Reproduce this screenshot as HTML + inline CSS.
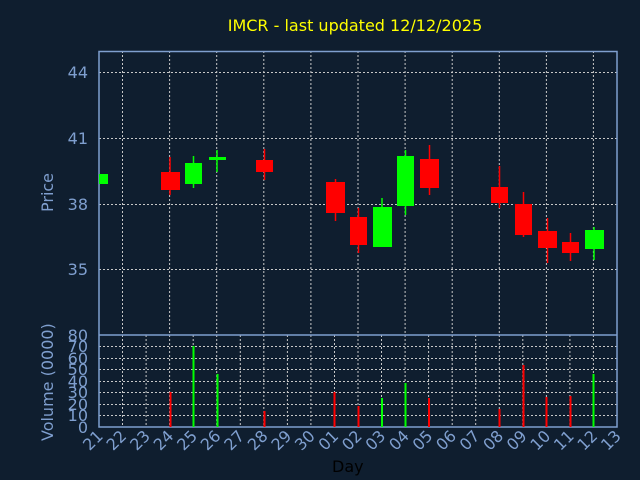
<!DOCTYPE html>
<html><head><meta charset="utf-8"><style>
html,body{margin:0;padding:0;background:#0f1e2f;width:640px;height:480px;overflow:hidden}
svg{display:block}
text{font-family:"DejaVu Sans","Liberation Sans",sans-serif}
</style></head><body>
<svg width="640" height="480" viewBox="0 0 640 480" xmlns="http://www.w3.org/2000/svg">
<rect width="640" height="480" fill="#0f1e2f"/>
<text x="355" y="31" fill="#ffff00" font-size="16" text-anchor="middle">IMCR - last updated 12/12/2025</text>
<g stroke="#c8c8c8" stroke-width="1" stroke-dasharray="2,2" fill="none">
<!-- price horizontal -->
<path d="M99 72.5H617M99 138.5H617M99 204.5H617M99 269.5H617"/>
<!-- price vertical odd days -->
<path d="M122.5 51V335M169.6 51V335M216.7 51V335M263.8 51V335M310.9 51V335M358 51V335M405.1 51V335M452.2 51V335M499.3 51V335M546.4 51V335M593.4 51V335"/>
<!-- volume horizontal -->
<path d="M99 346.5H617M99 358.5H617M99 369.5H617M99 381.5H617M99 392.5H617M99 404.5H617M99 415.5H617"/>
<!-- volume vertical every day -->
<path d="M122.5 335V427M146.1 335V427M169.6 335V427M193.2 335V427M216.7 335V427M240.3 335V427M263.8 335V427M287.4 335V427M310.9 335V427M334.5 335V427M358 335V427M381.5 335V427M405.1 335V427M428.6 335V427M452.2 335V427M475.7 335V427M499.3 335V427M522.8 335V427M546.4 335V427M569.9 335V427M593.4 335V427"/>
</g>
<g stroke="#7f9fcf" stroke-width="1.5" fill="none">
<rect x="99" y="51.5" width="518" height="375.5"/>
<path d="M99 335H617"/>
</g>
<!-- candles -->
<g stroke-width="1.5">
<rect x="99" y="174" width="9" height="10" fill="#00ff00"/>
<line x1="170" y1="157" x2="170" y2="195" stroke="#ff0000"/><rect x="161" y="172" width="19" height="18" fill="#ff0000"/>
<line x1="193.5" y1="156" x2="193.5" y2="188" stroke="#00ff00"/><rect x="185" y="163" width="17" height="21" fill="#00ff00"/>
<line x1="217" y1="150" x2="217" y2="172" stroke="#00ff00"/><rect x="209" y="157" width="17" height="3" fill="#00ff00"/>
<line x1="264.5" y1="149" x2="264.5" y2="180" stroke="#ff0000"/><rect x="256" y="160" width="17" height="12" fill="#ff0000"/>
<line x1="335.5" y1="179" x2="335.5" y2="221" stroke="#ff0000"/><rect x="326" y="182" width="19" height="31" fill="#ff0000"/>
<line x1="358.5" y1="208" x2="358.5" y2="253" stroke="#ff0000"/><rect x="350" y="217" width="17" height="28" fill="#ff0000"/>
<line x1="382" y1="198" x2="382" y2="247" stroke="#00ff00"/><rect x="373" y="207" width="19" height="40" fill="#00ff00"/>
<line x1="405.5" y1="150" x2="405.5" y2="215" stroke="#00ff00"/><rect x="397" y="156" width="17" height="50" fill="#00ff00"/>
<line x1="429.5" y1="145" x2="429.5" y2="195" stroke="#ff0000"/><rect x="420" y="159" width="19" height="29" fill="#ff0000"/>
<line x1="499.5" y1="166" x2="499.5" y2="208" stroke="#ff0000"/><rect x="491" y="187" width="17" height="16" fill="#ff0000"/>
<line x1="523.5" y1="192" x2="523.5" y2="237" stroke="#ff0000"/><rect x="515" y="204" width="17" height="31" fill="#ff0000"/>
<line x1="547.5" y1="218" x2="547.5" y2="263" stroke="#ff0000"/><rect x="538" y="231" width="19" height="17" fill="#ff0000"/>
<line x1="570.5" y1="233" x2="570.5" y2="261" stroke="#ff0000"/><rect x="562" y="242" width="17" height="11" fill="#ff0000"/>
<line x1="594" y1="227" x2="594" y2="260" stroke="#00ff00"/><rect x="585" y="230" width="19" height="19" fill="#00ff00"/>
</g>
<!-- volume bars -->
<g stroke-width="2">
<line x1="170.5" y1="392" x2="170.5" y2="427" stroke="#ff0000"/>
<line x1="193.5" y1="346" x2="193.5" y2="427" stroke="#00ff00"/>
<line x1="217.5" y1="374" x2="217.5" y2="427" stroke="#00ff00"/>
<line x1="264.5" y1="411" x2="264.5" y2="427" stroke="#ff0000"/>
<line x1="334.5" y1="392" x2="334.5" y2="427" stroke="#ff0000"/>
<line x1="358.5" y1="406" x2="358.5" y2="427" stroke="#ff0000"/>
<line x1="382" y1="398" x2="382" y2="427" stroke="#00ff00"/>
<line x1="405.5" y1="383" x2="405.5" y2="427" stroke="#00ff00"/>
<line x1="429" y1="398" x2="429" y2="427" stroke="#ff0000"/>
<line x1="499.5" y1="409" x2="499.5" y2="427" stroke="#ff0000"/>
<line x1="523.5" y1="365" x2="523.5" y2="427" stroke="#ff0000"/>
<line x1="546.5" y1="397" x2="546.5" y2="427" stroke="#ff0000"/>
<line x1="570.5" y1="396" x2="570.5" y2="427" stroke="#ff0000"/>
<line x1="593.5" y1="374" x2="593.5" y2="427" stroke="#00ff00"/>
</g>
<!-- price labels -->
<g fill="#7f9fcf" font-size="16" text-anchor="end">
<text x="88" y="78">44</text><text x="88" y="144">41</text><text x="88" y="210">38</text><text x="88" y="275">35</text>
</g>
<g fill="#7f9fcf" font-size="16" text-anchor="end">
<text x="88" y="341">80</text><text x="88" y="352">70</text><text x="88" y="364">60</text><text x="88" y="375">50</text><text x="88" y="387">40</text><text x="88" y="398">30</text><text x="88" y="410">20</text><text x="88" y="421">10</text><text x="88" y="433">0</text>
</g>
<text transform="translate(53,212) rotate(-90)" fill="#7f9fcf" font-size="16">Price</text>
<text transform="translate(53,441) rotate(-90)" fill="#7f9fcf" font-size="16">Volume (0000)</text>
<!-- day labels -->
<g fill="#7f9fcf" font-size="16" text-anchor="end">
<text transform="translate(104,437) rotate(-45)">21</text>
<text transform="translate(127.5,437) rotate(-45)">22</text>
<text transform="translate(151.1,437) rotate(-45)">23</text>
<text transform="translate(174.6,437) rotate(-45)">24</text>
<text transform="translate(198.2,437) rotate(-45)">25</text>
<text transform="translate(221.7,437) rotate(-45)">26</text>
<text transform="translate(245.3,437) rotate(-45)">27</text>
<text transform="translate(268.8,437) rotate(-45)">28</text>
<text transform="translate(292.4,437) rotate(-45)">29</text>
<text transform="translate(315.9,437) rotate(-45)">30</text>
<text transform="translate(339.5,437) rotate(-45)">01</text>
<text transform="translate(363,437) rotate(-45)">02</text>
<text transform="translate(386.5,437) rotate(-45)">03</text>
<text transform="translate(410.1,437) rotate(-45)">04</text>
<text transform="translate(433.6,437) rotate(-45)">05</text>
<text transform="translate(457.2,437) rotate(-45)">06</text>
<text transform="translate(480.7,437) rotate(-45)">07</text>
<text transform="translate(504.3,437) rotate(-45)">08</text>
<text transform="translate(527.8,437) rotate(-45)">09</text>
<text transform="translate(551.4,437) rotate(-45)">10</text>
<text transform="translate(574.9,437) rotate(-45)">11</text>
<text transform="translate(598.4,437) rotate(-45)">12</text>
<text transform="translate(622,437) rotate(-45)">13</text>
</g>
<text x="332" y="472" fill="#000000" font-size="16">Day</text>
</svg>
</body></html>
